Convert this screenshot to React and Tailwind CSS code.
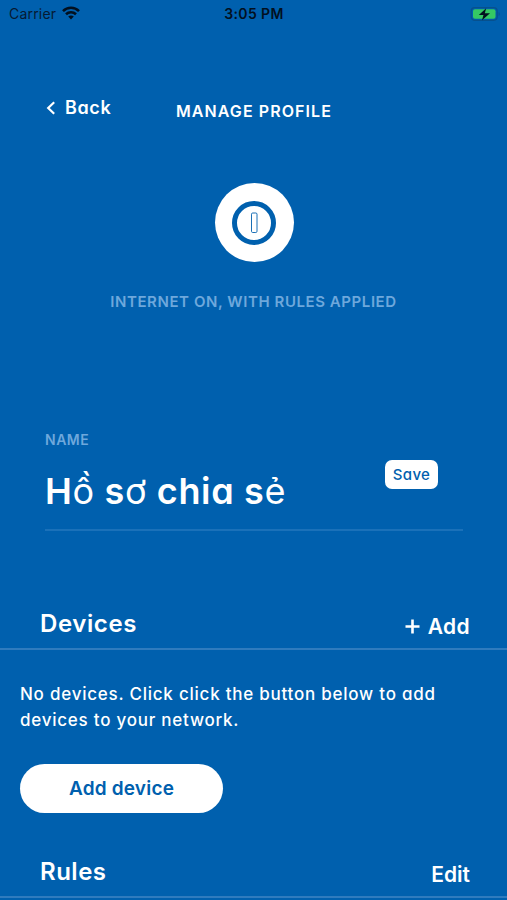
function StatusBar() {
  return (
    <div className="grid h-7 grid-cols-3 items-center pr-[7px] pl-[9px] text-[14px] leading-7 text-[#061a33]">
      <div className="flex items-center gap-[6px]">
        <span className="tracking-[0.2px] [font-feature-settings:normal]">Carrier</span>
        <svg width="18" height="14" viewBox="0 0 18 14" fill="none" stroke="#02101f" strokeWidth="2.6" className="-mt-[2px]">
          <path d="M1 5.1C5.5.7 12.5.7 17 5.1" />
          <path d="M4 8.3C6.8 5.6 11.2 5.6 14 8.3" />
          <path d="M6.2 10.6C7.8 9.2 10.2 9.2 11.8 10.6L9 13.5Z" fill="#02101f" stroke="none" />
        </svg>
      </div>
      <span className="-ml-px text-center font-semibold tracking-[0.4px] whitespace-nowrap text-[#02101f]">3:05 PM</span>
      <div className="flex justify-end">
        <svg width="30" height="14" viewBox="0 0 30 14">
          <rect x="1.2" y="0.7" width="26" height="12.6" rx="3.5" fill="none" stroke="#07508d" strokeWidth="1.2" />
          <rect x="3" y="2.3" width="22.5" height="9.4" rx="2" fill="#35c964" />
          <path d="M28.7 5c1.3.5 1.3 3.5 0 4z" fill="#07508d" />
          <path d="M16.2 1.2L8.800 8h4.700l-1.500 5.200L20 6.300h-5.200z" fill="#02101f" />
        </svg>
      </div>
    </div>
  );
}

function Header() {
  return (
    <header className="mt-[68px] grid h-8 grid-cols-[176px_1fr] whitespace-nowrap">
      <button className="flex h-6 items-center pl-[46px] text-[18px] leading-6 font-semibold">
        <svg width="10" height="14" viewBox="0 0 10 14" fill="none" stroke="currentColor" strokeWidth="2.2" className="mr-[9px]">
          <path d="M8.2 1.3L2.2 7l6 5.7" />
        </svg>
        <span className="tracking-[0.6px]">Back</span>
      </button>
      <h1 className="pt-[3px] text-[16px] leading-6 font-semibold tracking-[1.08px]">MANAGE PROFILE</h1>
    </header>
  );
}

function InternetToggle() {
  return (
    <section className="mt-[55px] flex flex-col items-center">
      <button className="ml-px flex size-[79px] items-center justify-center rounded-full bg-white">
        <svg width="44" height="44" viewBox="0 0 44 44" fill="none" stroke="#0060ae">
          <circle cx="22" cy="22" r="19.5" strokeWidth="5" />
          <rect x="19.500" y="12" width="5.500" height="19.500" rx="1.200" strokeWidth="0.900" />
        </svg>
      </button>
      <p className="mt-7 text-[15px] leading-6 font-semibold tracking-[0.57px] whitespace-nowrap text-[#6ea8dc]">
        INTERNET ON, WITH RULES APPLIED
      </p>
    </section>
  );
}

function NameField() {
  return (
    <section className="mx-[45px] mt-[116px] h-[101px] w-[418px] border-b-2 border-[#1b71b9]">
      <p className="text-[14px] leading-5 font-semibold tracking-[0.5px] text-[#6ea8dc]">NAME</p>
      <div className="flex justify-between pr-[25px]">
        <p className="mt-[17px] text-[36px] leading-[48px] font-semibold tracking-[0.65px] whitespace-nowrap">
          H<span className="font-normal">ồ</span> s<span className="font-normal">ơ</span> chia s<span className="font-normal">ẻ</span>
        </p>
        <button className="mt-[10px] h-[29px] w-[53px] rounded-[7px] bg-white text-[15px] leading-[29px] font-medium tracking-[0.3px] text-[#0060ae]">Save</button>
      </div>
    </section>
  );
}

function Devices() {
  return (
    <section className="mt-[77px]">
      <div className="flex h-[42px] justify-between border-b-2 border-[#2f7bbe] pr-[37px] pl-10 font-semibold">
        <h2 className="text-[24px] leading-8 tracking-[0.6px]">Devices</h2>
        <button className="mt-[3px] flex h-8 items-center text-[21px] leading-8 tracking-[0.4px]">
          <svg width="15" height="15" viewBox="0 0 15 15" stroke="currentColor" strokeWidth="2.6" className="mr-2 mb-[2px]">
            <path d="M7.5 0.5v14M0.5 7.500h14" />
          </svg>
          <span>Add</span>
        </button>
      </div>
      <div className="px-5 pt-[31px]">
        <p className="text-[17px] leading-[26px] font-medium tracking-[0.76px] whitespace-nowrap">
          No devices. Click click the button below to add
          <br />
          devices to your network.
        </p>
        <button className="mt-[31px] h-[49px] w-[203px] rounded-full bg-white text-[19px] leading-[47px] font-semibold tracking-[0.2px] text-[#0060ae]">Add device</button>
      </div>
    </section>
  );
}

function Rules() {
  return (
    <section className="mt-[43px] flex h-[42px] justify-between border-b-2 border-[#2f7bbe] pr-[37px] pl-10 font-semibold">
      <h2 className="text-[24px] leading-8 tracking-[0.5px]">Rules</h2>
      <button className="mt-[3px] h-8 text-[21px] leading-8">Edit</button>
    </section>
  );
}

export default function App() {
  return (
    <main className="h-[900px] w-[507px] overflow-hidden bg-[#0060ae] font-['Inter',sans-serif] text-white [font-feature-settings:'cv11']">
      <StatusBar />
      <Header />
      <InternetToggle />
      <NameField />
      <Devices />
      <Rules />
    </main>
  );
}
